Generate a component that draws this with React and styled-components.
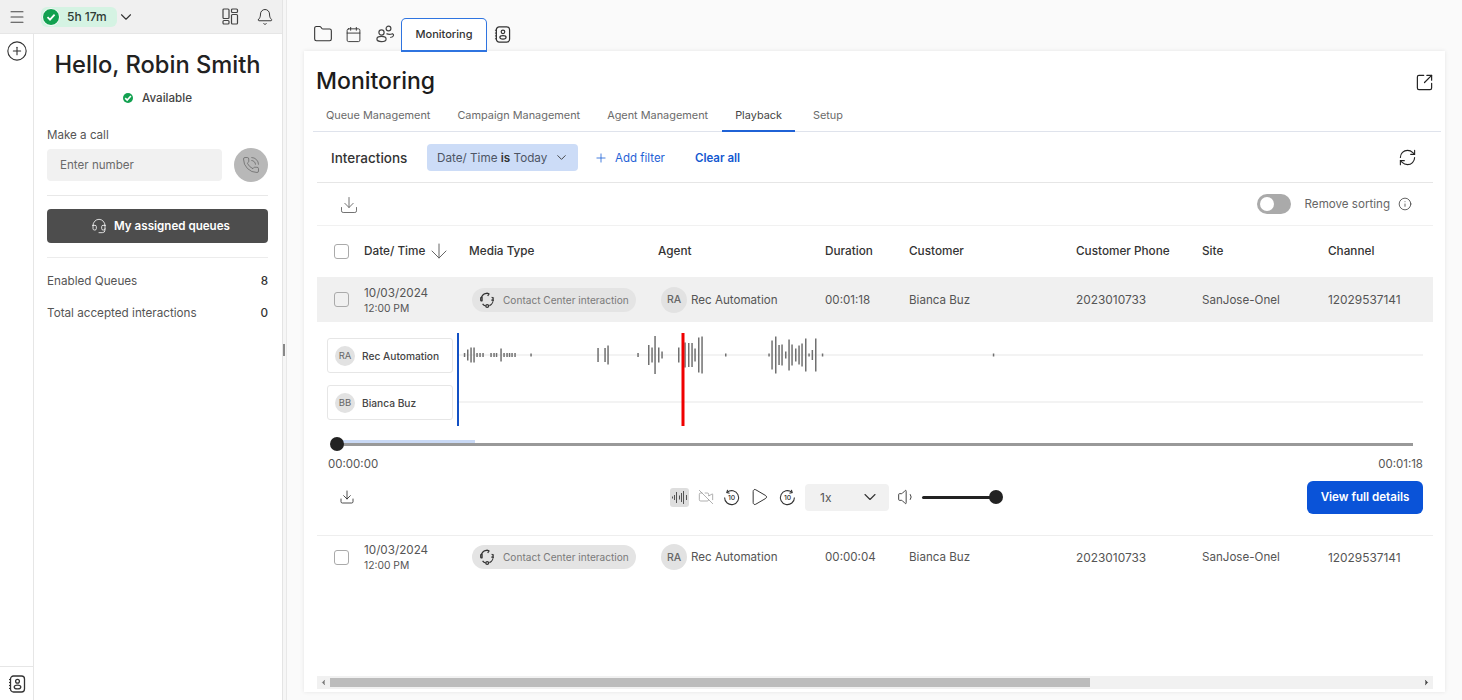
import React from "react";
import styled, { createGlobalStyle } from "styled-components";
import {
	ArrowDown,
	Bell,
	ChevronDown,
	ChevronLeft,
	ChevronRight,
	CirclePlus,
	Download,
	Folder,
	Calendar,
	Info,
	Menu,
	PhoneCall,
	Play,
	Plus,
	RefreshCw,
	SquareArrowOutUpRight,
	VideoOff,
	Volume1,
	Headset,
} from "lucide-react";

const GlobalStyle = createGlobalStyle`
	html, body {
		margin: 0;
		padding: 0;
		background: #fafafa;
	}
	* {
		box-sizing: border-box;
	}
	body {
		font-family: Inter, "Liberation Sans", sans-serif;
		color: #222;
	}
`;

const columns = "47px 105px 189px 167px 84px 167px 126px 126px 1fr";

const speechBars = [
	[464.5, 4], [467.7, 11], [471, 15], [474, 15], [477, 4], [480, 4], [483, 4],
	[491, 4], [494, 4], [496.5, 4], [501, 13], [504, 4], [507, 4], [509.5, 4], [512, 4], [515, 4],
	[531, 3], [598, 14], [605, 14], [608, 19], [638, 4],
	[648.7, 20], [652, 15], [655, 38], [658.7, 15], [662, 7], [678.7, 15],
	[685, 25], [688.7, 24], [692, 24], [695, 13], [698.7, 35], [702, 37],
	[725.7, 3], [769, 3], [772, 29], [775.7, 37], [779, 20], [782, 21], [785.7, 7],
	[789, 31], [792, 21], [795.7, 13], [799, 19], [802, 23], [805.7, 33], [809, 3],
	[812.3, 10], [815.7, 33], [822.5, 3], [993.5, 3],
];

const rows = [
	{ id: 1, duration: "00:01:18", expanded: true },
	{ id: 2, duration: "00:00:04", expanded: false },
];

function LayoutIcon() {
	return (
		<svg width="17" height="17" viewBox="0 0 17 17" fill="none" stroke="#444" strokeWidth="1.2">
			<rect x="1" y="1" width="6" height="9.5" rx="1" />
			<rect x="1" y="12.5" width="6" height="3.5" rx="1" />
			<rect x="9.5" y="1" width="6" height="3.5" rx="1" />
			<rect x="9.5" y="6.5" width="6" height="9.5" rx="1" />
		</svg>
	);
}

function ContactBook({ size = 18 }) {
	return (
		<svg width={size} height={size} viewBox="0 0 18 18" fill="none" stroke="#333" strokeWidth="1.3">
			<rect x="2.5" y="1" width="14" height="16" rx="3" />
			<circle cx="9.5" cy="6.2" r="1.9" />
			<ellipse cx="9.5" cy="12" rx="3.3" ry="1.9" />
			<path d="M1 4.5h2M1 7.5h2M1 10.5h2M1 13.5h2" strokeWidth="1" />
		</svg>
	);
}

function PeopleIcon() {
	return (
		<svg width="19" height="18" viewBox="0 0 19 18" fill="none" stroke="#444" strokeWidth="1.2">
			<circle cx="5.5" cy="7.5" r="2.6" />
			<ellipse cx="5.5" cy="14" rx="4.6" ry="2.6" />
			<circle cx="12.5" cy="3.5" r="2.4" />
			<path d="M10.5 8.6c1.8.9 4 .9 6 .1.8.4 1.2 1.2 1 2-.3 1-1.6 1.7-3.3 1.8" />
		</svg>
	);
}

function InteractionIcon() {
	return (
		<svg width="16" height="16" viewBox="0 0 16 16" fill="none" stroke="#333" strokeWidth="1.2">
			<path d="M9.8 1.6A6.4 6.4 0 0 0 2.5 5.2" />
			<path d="M1.7 8.2v-2.2c0-.6.9-.9 1.4-.5v3.3c-.5.4-1.4.1-1.4-.6z" />
			<path d="M7.6 1 10 2l-1.3 2" />
			<path d="M13.8 6.2c.9 2.8-.5 6-3.4 7.4" />
			<path d="M12.6 5.3 15 6.2M12.3 8.1h2.6" />
			<circle cx="8.2" cy="14" r="1.4" />
			<path d="M6.8 14c-1.2-.3-2.4-1-3.2-2.2" />
		</svg>
	);
}

function WaveIcon() {
	return (
		<svg width="15" height="15" viewBox="0 0 15 15" fill="none" stroke="#555" strokeWidth="1">
			<path d="M.5 6.5v2M2.5 5v5M4.5 2v11M7.5 5.5v4M9.5 3v9M11.5 1v13M14.5 5v5" />
		</svg>
	);
}

function SkipIcon({ forward }) {
	return (
		<svg width="17" height="17" viewBox="0 0 17 17" fill="none" stroke="#333" strokeWidth="1.1">
			<g transform={forward ? "translate(17 0) scale(-1 1)" : undefined}>
				<path d="M4.2 3.2A7 7 0 1 1 1.6 8.5" />
				<path d="M4.6 0.8 3.8 3.6l2.8.6" />
			</g>
			<text x="8.6" y="11" textAnchor="middle" fontSize="6.8" fontWeight="500" fill="#333" stroke="none" fontFamily="Inter, sans-serif">10</text>
		</svg>
	);
}

function Waveform() {
	return (
		<WaveSvg viewBox="457 333 966 93" width="966" height="93">
			<line x1="459" y1="355" x2="1423" y2="355" stroke="#efefef" strokeWidth="1.4" />
			<line x1="459" y1="402" x2="1423" y2="402" stroke="#efefef" strokeWidth="1.4" />
			{speechBars.map(([x, h]) => (
				<rect key={x} x={x - 0.7} y={355 - h / 2} width="1.5" height={h} fill="#707070" />
			))}
			<rect x="457" y="333" width="2" height="93" fill="#1250c4" />
			<rect x="681.5" y="333" width="3" height="93" fill="#f00000" />
		</WaveSvg>
	);
}

function DataRow({ row }) {
	return (
		<Row $active={row.expanded}>
			<Check />
			<DateCell>
				<DateText>10/03/2024</DateText>
				<TimeText>12:00 PM</TimeText>
			</DateCell>
			<div>
				<MediaChip>
					<InteractionIcon />
					Contact Center interaction
				</MediaChip>
			</div>
			<AgentCell>
				<Avatar $size={26}>RA</Avatar>
				Rec Automation
			</AgentCell>
			<Cell>{row.duration}</Cell>
			<Cell>Bianca Buz</Cell>
			<Cell $num>2023010733</Cell>
			<Cell>SanJose-Onel</Cell>
			<Cell $num>12029537141</Cell>
		</Row>
	);
}

export default function App() {
	return (
		<>
			<GlobalStyle />
			<Page>
				<Sidebar>
					<TopBar>
						<IconSlot $width={33}>
							<Menu size={18} strokeWidth={1.4} color="#444" />
						</IconSlot>
						<TimerPill>
							<StatusDot $size={16} $ring>
								<svg width="10" height="10" viewBox="0 0 10 10" fill="none" stroke="#fff" strokeWidth="1.8">
									<path d="M1.5 5.2 4 7.6l4.6-5" />
								</svg>
							</StatusDot>
							5h 17m
						</TimerPill>
						<ChevronSlot>
							<ChevronDown size={18} strokeWidth={1.5} color="#333" />
						</ChevronSlot>
						<TopActions>
							<LayoutIcon />
							<Bell size={18} strokeWidth={1.3} color="#333" />
						</TopActions>
					</TopBar>
					<SideBody>
						<Rail>
							<CirclePlus size={22} strokeWidth={1.2} color="#333" />
							<RailFoot>
								<ContactBook size={18} />
							</RailFoot>
						</Rail>
						<Panel>
							<Hello>Hello, Robin Smith</Hello>
							<Availability>
								<StatusDot $size={10}>
									<svg width="8" height="8" viewBox="0 0 10 10" fill="none" stroke="#fff" strokeWidth="2">
										<path d="M1.5 5.2 4 7.6l4.6-5" />
									</svg>
								</StatusDot>
								Available
							</Availability>
							<CallLabel>Make a call</CallLabel>
							<CallRow>
								<NumberField>Enter number</NumberField>
								<CallButton>
									<PhoneCall size={18} strokeWidth={1} color="#666" />
								</CallButton>
							</CallRow>
							<QueueButton>
								<Headset size={16} strokeWidth={1.2} color="#fff" />
								My assigned queues
							</QueueButton>
							<Stat $first>
								Enabled Queues
								<strong>8</strong>
							</Stat>
							<Stat>
								Total accepted interactions
								<strong>0</strong>
							</Stat>
						</Panel>
					</SideBody>
				</Sidebar>
				<Gutter>
					<Handle />
				</Gutter>
				<Main>
					<TabStrip>
						<StripIcon><Folder size={20} strokeWidth={1.3} color="#333" /></StripIcon>
						<StripIcon><Calendar size={17} strokeWidth={1.3} color="#333" /></StripIcon>
						<StripIcon><PeopleIcon /></StripIcon>
						<ActiveTab>Monitoring</ActiveTab>
						<StripIcon><ContactBook size={17} /></StripIcon>
					</TabStrip>
					<Card>
						<TitleRow>
							<Title>Monitoring</Title>
							<SquareArrowOutUpRight size={19} strokeWidth={1.5} color="#222" />
						</TitleRow>
						<Tabs>
							<Tab>Queue Management</Tab>
							<Tab>Campaign Management</Tab>
							<Tab>Agent Management</Tab>
							<Tab $active>Playback</Tab>
							<Tab $shift>Setup</Tab>
						</Tabs>
						<FilterBar>
							<FilterTitle>Interactions</FilterTitle>
							<FilterChip>
								<span>Date/ Time <b>is</b> Today</span>
								<ChevronDown size={15} strokeWidth={1.4} color="#333" />
							</FilterChip>
							<AddFilter>
								<Plus size={14} strokeWidth={1.4} />
								Add filter
							</AddFilter>
							<ClearAll>Clear all</ClearAll>
							<RefreshSlot>
								<RefreshCw size={19} strokeWidth={1.4} color="#222" />
							</RefreshSlot>
						</FilterBar>
						<Toolbar>
							<Download size={20} strokeWidth={1.1} color="#666" />
							<SortGroup>
								<Toggle />
								<SortLabel>Remove sorting</SortLabel>
								<Info size={14} strokeWidth={1.3} color="#333" />
							</SortGroup>
						</Toolbar>
						<HeadRow>
							<Check />
							<HeadCell>
								Date/ Time
								<ArrowDown size={24} strokeWidth={1} color="#666" />
							</HeadCell>
							<HeadCell>Media Type</HeadCell>
							<HeadCell>Agent</HeadCell>
							<HeadCell>Duration</HeadCell>
							<HeadCell>Customer</HeadCell>
							<HeadCell>Customer Phone</HeadCell>
							<HeadCell>Site</HeadCell>
							<HeadCell>Channel</HeadCell>
						</HeadRow>
						<DataRow row={rows[0]} />
						<Detail>
							<WaveGrid>
								<Speakers>
									<Speaker>
										<Avatar $size={20}>RA</Avatar>
										Rec Automation
									</Speaker>
									<Speaker>
										<Avatar $size={20}>BB</Avatar>
										Bianca Buz
									</Speaker>
								</Speakers>
								<Waveform />
							</WaveGrid>
							<Scrubber>
								<Buffered />
								<Knob />
							</Scrubber>
							<Times>
								<span>00:00:00</span>
								<span>00:01:18</span>
							</Times>
							<Controls>
								<DownloadSlot>
									<Download size={16} strokeWidth={1.2} color="#222" />
								</DownloadSlot>
								<Transport>
									<WaveToggle><WaveIcon /></WaveToggle>
									<VideoOff size={16} strokeWidth={1} color="#888" />
									<SkipIcon />
									<PlaySlot>
										<Play size={20} strokeWidth={1.1} color="#222" />
									</PlaySlot>
									<SkipIcon forward />
									<SpeedSelect>
										1x
										<ChevronDown size={20} strokeWidth={1.3} color="#333" />
									</SpeedSelect>
									<VolumeSlot>
										<Volume1 size={20} strokeWidth={1.1} color="#333" />
									</VolumeSlot>
									<VolumeTrack>
										<Knob $end />
									</VolumeTrack>
								</Transport>
								<DetailsButton>View full details</DetailsButton>
							</Controls>
						</Detail>
						<DataRow row={rows[1]} />
						<Spacer />
						<ScrollBar>
							<ChevronLeft size={9} fill="#777" color="#777" />
							<ScrollThumb />
							<ChevronRight size={9} fill="#444" color="#444" />
						</ScrollBar>
					</Card>
				</Main>
			</Page>
		</>
	);
}

const Page = styled.div`
	width: 1462px;
	height: 700px;
	display: flex;
	overflow: hidden;
	background: #fafafa;
`;

const Sidebar = styled.aside`
	width: 283px;
	height: 100%;
	display: flex;
	flex-direction: column;
	background: #fff;
	border-right: 1px solid #e4e4e4;
`;

const TopBar = styled.div`
	height: 34px;
	display: flex;
	align-items: center;
	background: #f0f0f0;
	border-bottom: 1px solid #e6e6e6;
`;

const IconSlot = styled.div`
	width: ${(p) => p.$width}px;
	display: flex;
	justify-content: center;
`;

const TimerPill = styled.div`
	margin-left: 8px;
	width: 76px;
	height: 20px;
	display: flex;
	align-items: center;
	gap: 7px;
	padding-left: 1px;
	border-radius: 6px;
	background: #d5f3e3;
	font-size: 12px;
	font-weight: 500;
	color: #2f3b35;
`;

const StatusDot = styled.span`
	width: ${(p) => p.$size}px;
	height: ${(p) => p.$size}px;
	flex: none;
	display: inline-flex;
	align-items: center;
	justify-content: center;
	border-radius: 50%;
	background: #12a150;
	box-sizing: content-box;
	border: ${(p) => (p.$ring ? "1px solid #fff" : "none")};
`;

const ChevronSlot = styled.div`
	display: flex;
`;

const TopActions = styled.div`
	margin-left: auto;
	padding-right: 8px;
	display: flex;
	align-items: center;
	gap: 17px;
`;

const SideBody = styled.div`
	flex: 1;
	display: flex;
	min-height: 0;
`;

const Rail = styled.div`
	width: 34px;
	display: flex;
	flex-direction: column;
	align-items: center;
	padding-top: 6px;
	border-right: 1px solid #e6e6e6;
`;

const RailFoot = styled.div`
	margin-top: auto;
	width: 100%;
	height: 34px;
	display: flex;
	align-items: center;
	justify-content: center;
	border-top: 1px solid #e6e6e6;
`;

const Panel = styled.div`
	flex: 1;
	padding: 0 14px 0 13px;
	display: flex;
	flex-direction: column;
`;

const Hello = styled.h1`
	margin: 16px 0 0;
	text-align: center;
	font-size: 23.7px;
	line-height: 29px;
	font-weight: 500;
	color: #222;
`;

const Availability = styled.div`
	margin-top: 11px;
	display: flex;
	align-items: center;
	justify-content: center;
	gap: 9px;
	font-size: 11.6px;
	line-height: 16px;
	font-weight: 500;
	color: #444;
`;

const CallLabel = styled.div`
	margin-top: 21px;
	font-size: 11.6px;
	line-height: 16px;
	color: #555;
`;

const CallRow = styled.div`
	margin-top: 5px;
	padding-bottom: 13px;
	display: flex;
	justify-content: space-between;
	align-items: center;
	border-bottom: 1px solid #e8e8e8;
`;

const NumberField = styled.div`
	width: 175px;
	height: 32px;
	padding-left: 13px;
	display: flex;
	align-items: center;
	border-radius: 4px;
	background: #f1f1f1;
	font-size: 11.6px;
	color: #6a6a6a;
`;

const CallButton = styled.div`
	width: 34px;
	height: 34px;
	display: flex;
	align-items: center;
	justify-content: center;
	border-radius: 50%;
	background: #b8b8b8;
`;

const QueueButton = styled.div`
	margin-top: 13px;
	height: 34px;
	padding-left: 6px;
	display: flex;
	align-items: center;
	justify-content: center;
	gap: 7px;
	border-radius: 4px;
	background: #4d4d4d;
	font-size: 11.6px;
	font-weight: 600;
	color: #fff;
`;

const Stat = styled.div`
	height: 34px;
	display: flex;
	align-items: center;
	justify-content: space-between;
	font-size: 11.7px;
	color: #555;
	${(p) => p.$first && "margin-top: 14px; padding-top: 7px; height: 39px; border-top: 1px solid #ececec;"}
	strong {
		font-weight: 500;
		color: #333;
	}
`;

const Gutter = styled.div`
	position: relative;
	width: 4px;
	height: 100%;
	background: #f6f6f6;
	border-right: 1px solid #e8e8e8;
`;

const Handle = styled.span`
	position: absolute;
	left: 0;
	top: 344px;
	width: 2px;
	height: 12px;
	background: #888;
`;

const Main = styled.main`
	flex: 1;
	min-width: 0;
	padding: 18px 17px 8px 17px;
	display: flex;
	flex-direction: column;
`;

const TabStrip = styled.div`
	height: 33px;
	padding-left: 3px;
	display: flex;
	align-items: flex-start;
`;

const StripIcon = styled.span`
	width: 31px;
	height: 32px;
	display: flex;
	align-items: center;
	justify-content: center;
	&:nth-child(3) {
		width: 32px;
	}
`;

const ActiveTab = styled.div`
	width: 86px;
	height: 34px;
	padding-bottom: 1px;
	display: flex;
	align-items: center;
	justify-content: center;
	background: #fff;
	border: 1px solid #2f74e0;
	border-bottom-width: 2px;
	border-radius: 5px 5px 0 0;
	font-size: 11px;
	font-weight: 500;
	color: #333;
	position: relative;
	z-index: 1;
`;

const Card = styled.section`
	flex: 1;
	min-height: 0;
	padding: 0 12px 2px 13px;
	display: flex;
	flex-direction: column;
	background: #fff;
	box-shadow: 0 0 4px rgba(0, 0, 0, 0.09);
`;

const TitleRow = styled.div`
	height: 49px;
	margin-left: -1px;
	padding-top: 14px;
	margin-right: -1px;
	display: flex;
	justify-content: space-between;
	align-items: center;
`;

const Title = styled.h2`
	margin: 0;
	padding-bottom: 4px;
	font-size: 23px;
	line-height: 32px;
	font-weight: 500;
	color: #1c1c1c;
`;

const Tabs = styled.div`
	height: 32px;
	margin: 0 -8px 0 -4.5px;
	display: flex;
	border-bottom: 1px solid #dfe3ec;
`;

const Tab = styled.div`
	height: 32px;
	padding: 0 13.5px;
	margin-left: ${(p) => (p.$shift ? "4px" : "0")};
	display: flex;
	align-items: center;
	font-size: 10.9px;
	color: ${(p) => (p.$active ? "#444" : "#6b6b6b")};
	border-bottom: 2px solid ${(p) => (p.$active ? "#1f62d6" : "transparent")};
`;

const FilterBar = styled.div`
	height: 51px;
	padding: 1px 0 0 14px;
	display: flex;
	align-items: center;
	border-bottom: 1px solid #e6e6e6;
`;

const FilterTitle = styled.div`
	width: 96px;
	font-size: 13.5px;
	font-weight: 500;
	color: #333;
`;

const FilterChip = styled.div`
	width: 151px;
	height: 27px;
	padding: 0 9px 0 10px;
	display: flex;
	align-items: center;
	justify-content: space-between;
	border-radius: 4px;
	background: #ccdcf7;
	font-size: 11.7px;
	color: #4d5565;
	b {
		font-weight: 600;
		color: #333;
	}
`;

const AddFilter = styled.div`
	margin-left: 16px;
	display: flex;
	align-items: center;
	gap: 7px;
	font-size: 11.5px;
	color: #1f62d6;
`;

const ClearAll = styled.div`
	margin-left: 30px;
	font-size: 11.5px;
	font-weight: 600;
	color: #1258d0;
`;

const RefreshSlot = styled.div`
	margin-left: auto;
	padding-right: 16px;
	display: flex;
`;

const Toolbar = styled.div`
	height: 43px;
	padding: 1px 21px 0 22px;
	display: flex;
	align-items: center;
	justify-content: space-between;
	border-bottom: 1px solid #f1f1f1;
`;

const SortGroup = styled.div`
	margin-top: -1px;
	display: flex;
	align-items: center;
`;

const Toggle = styled.div`
	position: relative;
	width: 34px;
	height: 20px;
	border-radius: 10px;
	background: #aaa;
	&::after {
		content: "";
		position: absolute;
		left: 3px;
		top: 3px;
		width: 14px;
		height: 14px;
		border-radius: 50%;
		background: #fff;
	}
`;

const SortLabel = styled.div`
	margin: 0 8px 0 14px;
	font-size: 11.6px;
	color: #666;
`;

const HeadRow = styled.div`
	height: 51px;
	padding-bottom: 1px;
	display: grid;
	grid-template-columns: ${columns};
	align-items: center;
`;

const HeadCell = styled.div`
	display: flex;
	align-items: center;
	gap: 2px;
	font-size: 11.75px;
	font-weight: 500;
	color: #333;
	white-space: nowrap;
`;

const Row = styled.div`
	height: ${(p) => (p.$active ? 45 : 42)}px;
	display: grid;
	grid-template-columns: ${columns};
	align-items: center;
	background: ${(p) => (p.$active ? "#f0f0f0" : "transparent")};
`;

const Check = styled.span`
	width: 15px;
	height: 15px;
	margin-left: 17px;
	display: block;
	border: 1.5px solid #aaa;
	border-radius: 3px;
	background: transparent;
`;

const DateCell = styled.div`
	padding-top: 1px;
	display: flex;
	flex-direction: column;
`;

const DateText = styled.span`
	font-size: 11.7px;
	line-height: 15px;
	color: #555;
`;

const TimeText = styled.span`
	font-size: 10.3px;
	line-height: 14px;
	color: #555;
`;

const MediaChip = styled.div`
	width: 164px;
	height: 24px;
	margin-left: 3px;
	padding-left: 7px;
	display: flex;
	align-items: center;
	gap: 8px;
	border-radius: 12px;
	background: #e4e4e4;
	font-size: 10.1px;
	color: #7a7a7a;
	white-space: nowrap;
`;

const AgentCell = styled.div`
	margin-left: 3px;
	display: flex;
	align-items: center;
	gap: 4px;
	font-size: 11.6px;
	color: #555;
`;

const Avatar = styled.span`
	width: ${(p) => p.$size}px;
	height: ${(p) => p.$size}px;
	flex: none;
	display: inline-flex;
	align-items: center;
	justify-content: center;
	border-radius: 50%;
	background: #e2e2e2;
	font-size: ${(p) => (p.$size > 22 ? 10.5 : 9.5)}px;
	font-weight: ${(p) => (p.$size > 22 ? 500 : 400)};
	color: #666;
`;

const Cell = styled.div`
	font-size: ${(p) => (p.$num ? 11.9 : 11.6)}px;
	color: #555;
	white-space: nowrap;
`;

const Detail = styled.div`
	height: 214px;
	padding: 11px 10px 0;
	border-bottom: 1px solid #eee;
`;

const WaveGrid = styled.div`
	display: flex;
	gap: 4px;
`;

const Speakers = styled.div`
	width: 126px;
	padding-top: 5px;
	display: flex;
	flex-direction: column;
	gap: 12px;
`;

const Speaker = styled.div`
	height: 35px;
	padding-left: 7px;
	display: flex;
	align-items: center;
	gap: 7px;
	border: 1px solid #e6e6e6;
	border-radius: 3px;
	font-size: 10.2px;
	font-weight: 500;
	color: #444;
	white-space: nowrap;
`;

const WaveSvg = styled.svg`
	display: block;
	flex: none;
`;

const Scrubber = styled.div`
	position: relative;
	height: 3px;
	margin: 16.5px 10px 0;
	background: #999;
`;

const Buffered = styled.span`
	position: absolute;
	left: 0;
	bottom: 3px;
	width: 138px;
	height: 3px;
	background: #c9d9f5;
`;

const Knob = styled.span`
	position: absolute;
	top: 50%;
	left: ${(p) => (p.$end ? "100%" : "0")};
	width: 14px;
	height: 14px;
	transform: translate(-50%, -50%);
	border-radius: 50%;
	background: #222;
`;

const Times = styled.div`
	margin-top: 10px;
	padding-left: 1px;
	display: flex;
	justify-content: space-between;
	font-size: 11.5px;
	line-height: 16px;
	color: #555;
`;

const Controls = styled.div`
	margin-top: 9px;
	height: 33px;
	display: flex;
	align-items: center;
`;

const DownloadSlot = styled.div`
	margin-left: 12px;
	display: flex;
`;

const Transport = styled.div`
	margin-left: 315px;
	display: flex;
	align-items: center;
	gap: 9px;
`;

const PlaySlot = styled.span`
	display: flex;
	margin: 0 1px 0 0;
`;

const VolumeSlot = styled.span`
	display: flex;
	margin-left: -1px;
`;

const WaveToggle = styled.div`
	width: 19px;
	height: 19px;
	display: flex;
	align-items: center;
	justify-content: center;
	border-radius: 3px;
	background: #dedede;
`;

const SpeedSelect = styled.div`
	width: 84px;
	height: 27px;
	padding: 0 9px 0 15px;
	display: flex;
	align-items: center;
	justify-content: space-between;
	border-radius: 4px;
	background: #f1f1f1;
	font-size: 12px;
	color: #555;
`;

const VolumeTrack = styled.div`
	position: relative;
	width: 74px;
	height: 3px;
	margin-left: -4px;
	background: #222;
	border-radius: 2px;
`;

const DetailsButton = styled.div`
	width: 116px;
	height: 33px;
	margin-left: auto;
	display: flex;
	align-items: center;
	justify-content: center;
	border-radius: 6px;
	background: #0a53d8;
	font-size: 11.6px;
	font-weight: 600;
	color: #fff;
`;

const Spacer = styled.div`
	flex: 1;
`;

const ScrollBar = styled.div`
	height: 13px;
	margin-bottom: 1px;
	padding: 0 2px;
	display: flex;
	align-items: center;
	justify-content: space-between;
	background: #f1f1f1;
	position: relative;
`;

const ScrollThumb = styled.span`
	position: absolute;
	left: 13px;
	top: 2px;
	width: 760px;
	height: 9px;
	background: #bcbcbc;
`;
